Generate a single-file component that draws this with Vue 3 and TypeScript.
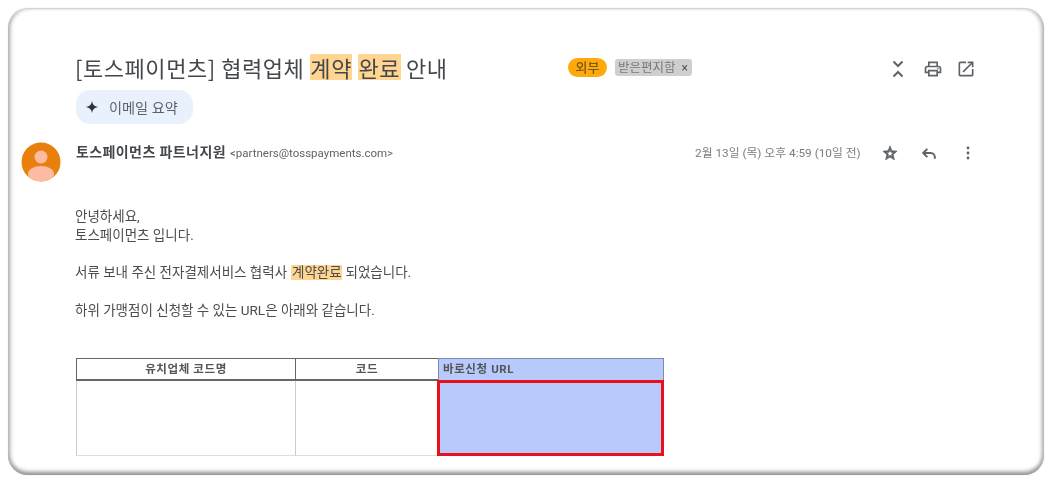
<script setup lang="ts">
const rows: string[] = ['안녕하세요,', '토스페이먼츠 입니다.'];
</script>

<template>
  <div class="page">
    <div class="card">
      <div class="subject-row">
        <h1 class="subject">[토스페이먼츠] 협력업체 <mark>계약</mark> <mark>완료</mark> 안내</h1>
        <span class="chip-ext">외부</span>
        <span class="chip-inbox">받은편지함 <span class="x">×</span></span>
        <div class="top-icons">
          <svg width="20" height="20" viewBox="0 0 20 20" fill="none" stroke="#5f6368" stroke-width="2"><path d="M5.500 2.500 10 7l4.500-4.500M5.500 17.500 10 13l4.500 4.500" /></svg>
          <svg width="20" height="20" viewBox="0 0 24 24" fill="#5f6368"><path d="M19 8h-1V3H6v5H5c-1.660 0-3 1.340-3 3v6h4v4h12v-4h4v-6c0-1.660-1.340-3-3-3zM8 5h8v3H8V5zm8 14H8v-4h8v4zm2-4v-2H6v2H4v-4c0-.55.45-1 1-1h14c.55 0 1 .45 1 1v4h-2z"/><circle cx="18" cy="11.500" r="1"/></svg>
          <svg class="open" width="20" height="20" viewBox="0 0 24 24" fill="#5f6368"><path d="M19 19H5V5h7V3H5a2 2 0 0 0-2 2v14a2 2 0 0 0 2 2h14a2 2 0 0 0 2-2v-7h-2v7zM14 3v2h3.590l-9.830 9.830 1.410 1.410L19 6.410V10h2V3h-7z"/></svg>
        </div>
      </div>

      <div class="summary">
        <svg width="16" height="16" viewBox="0 0 16 16" fill="#2f3235"><path d="M8 2c.4 3.500 2.300 5.500 6 6-3.700.5-5.600 2.500-6 6-.4-3.500-2.300-5.500-6-6 3.700-.5 5.600-2.500 6-6z"/></svg>
        <span>이메일 요약</span>
      </div>

      <div class="sender-row">
        <svg class="avatar" width="40" height="40" viewBox="0 0 40 40">
          <defs><clipPath id="av"><circle cx="20" cy="20" r="19.500"/></clipPath></defs>
          <g clip-path="url(#av)">
            <rect width="40" height="40" fill="#e97f0c"/>
            <circle cx="20" cy="15" r="6.500" fill="#fdbba4"/>
            <ellipse cx="20" cy="32" rx="13" ry="8" fill="#fdbba4"/>
          </g>
        </svg>
        <div class="sender"><b>토스페이먼츠 파트너지원</b> <span>&lt;partners@tosspayments.com&gt;</span></div>
        <div class="date">2월 13일 (목) 오후 4:59 (10일 전)</div>
        <div class="sender-icons">
          <svg width="20" height="20" viewBox="0 0 24 24" fill="#5f6368" stroke="#5f6368" stroke-width=".9"><path d="M20.500 9.800l-6.300-.55L12 3.500 9.800 9.250l-6.300.55 4.800 4.150L6.800 20.200 12 16.900l5.200 3.300-1.500-6.250 4.800-4.150zM12 14.700l-2.600 1.700.7-3.050-2.300-2 3-.27L12 8.300l1.200 2.780 3 .27-2.300 2 .7 3.050L12 14.700z"/></svg>
          <svg width="20" height="20" viewBox="0 0 24 24" fill="none" stroke="#5f6368" stroke-width="2.400"><path d="M10 7 5 12l5 5M5 12h9a5 5 0 0 1 5 5v2"/></svg>
          <svg width="20" height="20" viewBox="0 0 24 24" fill="#5f6368"><circle cx="12" cy="6" r="1.700"/><circle cx="12" cy="12" r="1.700"/><circle cx="12" cy="18" r="1.700"/></svg>
        </div>
      </div>

      <div class="body">
        <p v-for="r in rows" :key="r" class="line">{{ r }}</p>
        <p class="line gap">서류 보내 주신 전자결제서비스 협력사 <mark class="tight">계약완료</mark> 되었습니다.</p>
        <p class="line gap gap2">하위 가맹점이 신청할 수 있는 URL은 아래와 같습니다.</p>
      </div>

      <div class="table">
        <div class="th c1">유치업체 코드명</div>
        <div class="th c2">코드</div>
        <div class="th c3">바로신청 URL</div>
        <div class="td c1"></div>
        <div class="td c2"></div>
        <div class="td c3"></div>
      </div>
    </div>
  </div>
</template>

<style scoped>
.page {
  width: 1051px;
  height: 480px;
  box-sizing: border-box;
  padding: 8px 7px 5px 8px;
  background: #fff;
  overflow: hidden;
  font-family: Roboto, "Noto Sans CJK KR", "Noto Sans", sans-serif;
}
.card {
  height: 100%;
  box-sizing: border-box;
  border-radius: 20px;
  border-top: 1px solid #d4d4d4;
  background: #fff;
  box-shadow: inset 4px 0 4px -2px #a8a8a8, inset -4px 0 4px -2px #a8a8a8, inset 0 -5px 4px -2px #8c8c8c, 0 0 1px #bbb;
  padding: 43px 0 0 68px;
}
.subject-row {
  display: flex;
  align-items: center;
  height: 30px;
  filter: blur(0.45px);
}
.subject {
  margin: 0 0 0 -1px;
  width: 493px;
  font-size: 22px;
  font-weight: 400;
  letter-spacing: 0.55px;
  color: #44474b;
  line-height: 28px;
  white-space: nowrap;
  flex: none;
  font-family: "Noto Sans CJK KR", sans-serif;
}
mark {
  display: inline-block;
  background: #ffd591;
  color: inherit;
  padding: 0 0.5px;
  line-height: 26px;
}
.chip-ext {
  flex: none;
  width: 39px;
  height: 19px;
  border-radius: 10px;
  background: #ffa90c;
  color: #7a5a10;
  font-size: 13px;
  font-weight: 500;
  line-height: 19px;
  text-align: center;
  margin-right: 8px;
}
.chip-inbox {
  flex: none;
  width: 77px;
  height: 17px;
  box-sizing: border-box;
  border-radius: 3px;
  background: #cfcfcf;
  color: #777;
  font-size: 12.500px;
  line-height: 17px;
  padding-left: 3px;
  white-space: nowrap;
}
.x {
  color: #555;
  margin-left: 3px;
  font-size: 12px;
}
.top-icons {
  display: flex;
  gap: 15px;
  margin: 4px 0 0 196px;
}
.open {
  margin-left: -2px;
}
.summary {
  display: flex;
  align-items: center;
  gap: 9px;
  width: 117px;
  height: 34px;
  box-sizing: border-box;
  margin-top: 8px;
  padding-left: 8px;
  border-radius: 14px;
  background: #e9f1fd;
  color: #5f6368;
  font-size: 14.200px;
  filter: blur(0.4px);
}
.sender-row {
  display: flex;
  align-items: flex-start;
  height: 70px;
  margin: 13px 0 0 -54px;
  filter: blur(0.4px);
}
.avatar {
  flex: none;
  margin: 5px 15px 0 -1px;
}
.sender {
  width: 619px;
  flex: none;
  white-space: nowrap;
  line-height: 18px;
  padding-top: 6px;
}
.sender b {
  font-size: 14px;
  font-weight: 700;
  letter-spacing: 0.4px;
  color: #44474b;
}
.sender span {
  font-size: 11.500px;
  color: #5f6368;
}
.date {
  flex: none;
  width: 166px;
  padding-top: 7px;
  font-size: 11.800px;
  line-height: 18px;
  color: #7a7d81;
  white-space: nowrap;
}
.sender-icons {
  display: flex;
  gap: 19px;
  margin: 6px 0 0 19px;
}
.body {
  margin-left: -1px;
  font-size: 13.500px;
  color: #4a4d50;
  line-height: 19px;
  filter: blur(0.4px);
}
.body mark {
  line-height: 15px;
  margin-left: 1px;
}
.line {
  margin: 0;
  white-space: nowrap;
}
.gap {
  margin-top: 18px;
}
.gap2 {
  margin-top: 19px;
}
.table {
  display: grid;
  grid-template-columns: 219px 143px 226px;
  grid-template-rows: 23px 75px;
  width: 588px;
  margin-top: 38px;
  filter: blur(0.3px);
}
.th {
  border: 1px solid #666;
  border-bottom-width: 2px;
  border-right: 0;
  font-size: 11.500px;
  font-weight: 700;
  letter-spacing: 0.6px;
  color: #555;
  text-align: center;
  line-height: 20px;
  box-sizing: border-box;
}
.th.c3 {
  background: #b8c9fb;
  text-align: left;
  padding-left: 4px;
  border-right: 1px solid #7f8bb0;
  border-color: #7f8bb0;
  border-bottom: 0;
  line-height: 21px;
}
.td {
  border-left: 1px solid #ccc;
  border-bottom: 1px solid #ddd;
}
.td.c3 {
  background: #b8c9fb;
  border: 3px solid #e8101a;
  margin-left: -1px;
  margin-top: -1px;
}
</style>

<style>
html, body { margin: 0; background: #fff; }
</style>
